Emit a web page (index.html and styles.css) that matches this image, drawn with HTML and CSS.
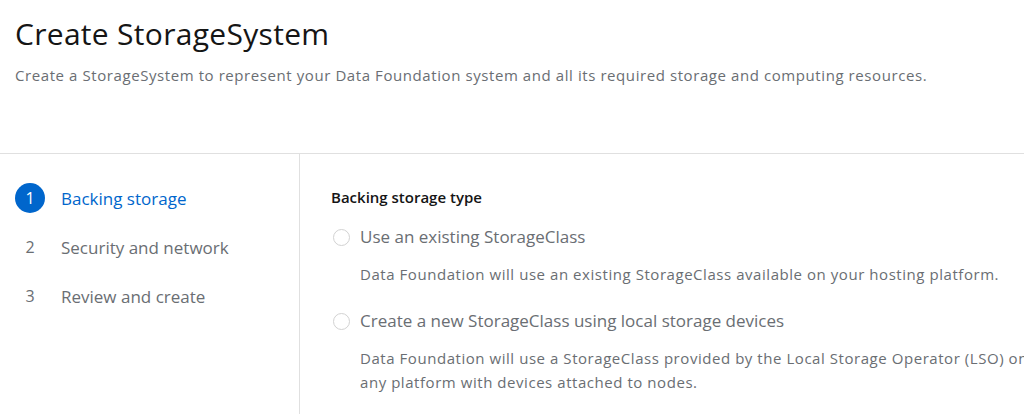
FILE: index.html
```html
<!DOCTYPE html>
<html lang="en">
<head>
    <meta charset="UTF-8">
    <title>Create StorageSystem</title>
    <link rel="stylesheet" href="styles.css">
</head>
<body>
    <div class="page-header">
        <h1 class="page-title">Create StorageSystem</h1>
        <p class="page-desc">Create a StorageSystem to represent your Data Foundation system and all its required storage and computing resources.</p>
    </div>

    <div class="wizard">
        <ol class="wizard-nav">
            <li class="nav-item current"><span class="nav-num">1</span>Backing storage</li>
            <li class="nav-item"><span class="nav-num">2</span>Security and network</li>
            <li class="nav-item"><span class="nav-num">3</span>Review and create</li>
        </ol>

        <div class="wizard-body">
            <div class="group-label">Backing storage type</div>

            <label class="radio">
                <input type="radio" name="backing" disabled>
                <span class="radio-text">
                    <span class="radio-label">Use an existing StorageClass</span>
                    <span class="radio-desc">Data Foundation will use an existing StorageClass available on your hosting platform.</span>
                </span>
            </label>

            <label class="radio">
                <input type="radio" name="backing" disabled>
                <span class="radio-text">
                    <span class="radio-label">Create a new StorageClass using local storage devices</span>
                    <span class="radio-desc">Data Foundation will use a StorageClass provided by the Local Storage Operator (LSO) on any platform with devices attached to nodes.</span>
                </span>
            </label>
        </div>
    </div>
</body>
</html>
```

FILE: styles.css
```css
body {
    font-family: "Open Sans", "Liberation Sans", sans-serif;
    margin: 0;
    padding: 0;
    background-color: #fff;
    color: #151515;
    overflow: hidden;
}
.page-header {
    padding: 14px 15px 0;
    height: 139px;
    border-bottom: 1px solid #e0e0e0;
}
.page-title {
    font-size: 30px;
    font-weight: 400;
    letter-spacing: 0.3px;
    margin: 0;
    line-height: 40px;
}
.page-desc {
    font-size: 15px;
    letter-spacing: 0.58px;
    color: #6a6e73;
    margin: 10px 0 0;
    line-height: 22px;
    white-space: nowrap;
}
.wizard {
    display: flex;
    height: 260px;
}
.wizard-nav {
    list-style: none;
    margin: 0;
    padding: 29px 0 0 15px;
    width: 284px;
    flex: none;
    border-right: 1px solid #e0e0e0;
}
.nav-item {
    display: flex;
    align-items: center;
    height: 30px;
    margin-bottom: 19px;
    font-size: 17px;
    color: #6a6e73;
}
.nav-num {
    width: 30px;
    height: 30px;
    margin-right: 16px;
    display: flex;
    align-items: center;
    justify-content: center;
    font-size: 16px;
    border-radius: 50%;
}
.nav-item.current {
    color: #0066cc;
}
.nav-item.current .nav-num {
    background-color: #0066cc;
    color: #fff;
}
.wizard-body {
    flex: none;
    width: 710px;
    padding: 32px 0 0 31px;
}
.group-label {
    font-size: 15px;
    font-weight: 600;
    line-height: 22px;
    margin-bottom: 18px;
}
.radio {
    display: flex;
    align-items: flex-start;
    margin-bottom: 24px;
}
.radio input {
    appearance: none;
    flex: none;
    width: 17px;
    height: 17px;
    margin: 3px 10px 0 2px;
    border: 1px solid #d2d2d2;
    border-radius: 50%;
    background: #fff;
}
.radio-text {
    display: flex;
    flex-direction: column;
}
.radio-label {
    font-size: 17px;
    line-height: 22px;
    color: #6a6e73;
}
.radio-desc {
    font-size: 15px;
    letter-spacing: 0.55px;
    line-height: 24px;
    color: #6a6e73;
    margin-top: 14px;
}
```
